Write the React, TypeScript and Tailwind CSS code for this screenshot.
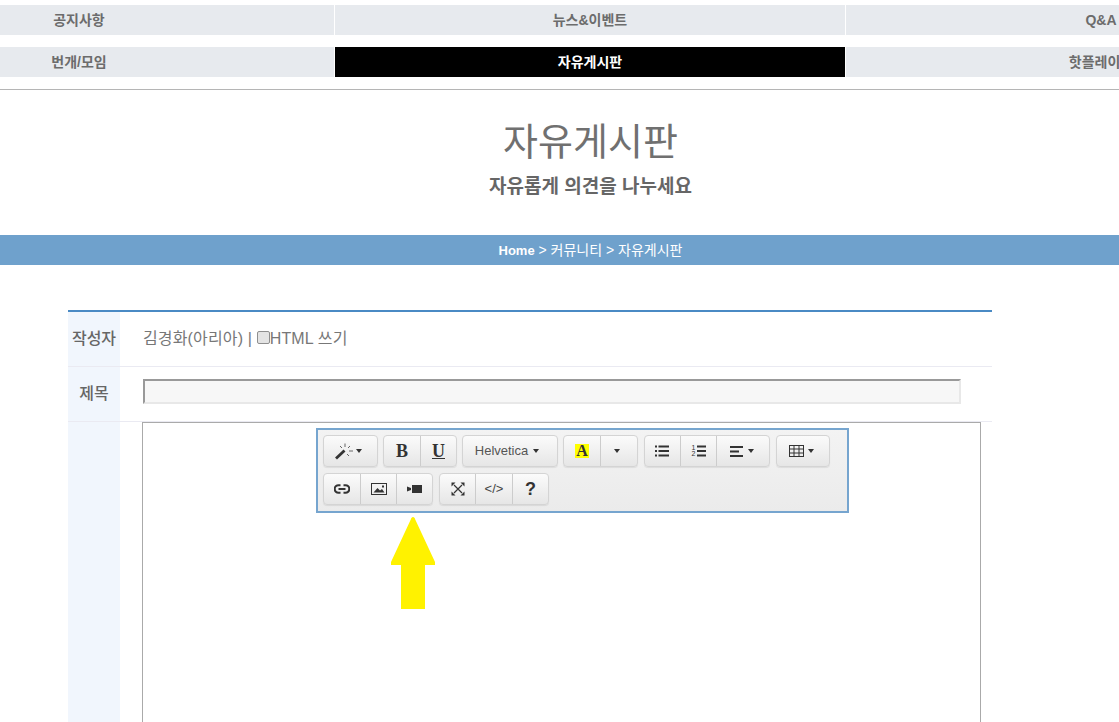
import React from "react";

const font = { fontFamily: '"Liberation Sans","Noto Sans CJK KR",sans-serif' };
const serif = { fontFamily: '"Liberation Serif",serif' };

const Caret = ({ className = "" }: { className?: string }) => (
  <span className={"inline-block w-0 h-0 border-x-[3.5px] border-x-transparent border-t-[4px] border-t-[#333] " + className} />
);

const Btn = ({ w, children, last }: { w: string; children: React.ReactNode; last?: boolean }) => (
  <div className={w + " h-full flex items-center justify-center " + (last ? "" : "border-r border-[#ccc]")}>{children}</div>
);

const Group = ({ children }: { children: React.ReactNode }) => (
  <div className="h-[32px] flex rounded-[4px] border border-[#d4d4d4] bg-gradient-to-b from-[#fbfbfb] to-[#e6e6e6] shadow-[0_1px_1px_rgba(0,0,0,0.08)] text-[#333]">
    {children}
  </div>
);

const Wand = () => (
  <svg width="19" height="17" viewBox="0 0 19 17" fill="none">
    <path d="M1 15.5L9.5 7.5" stroke="#333" strokeWidth="2.8" />
    <path d="M10 0.5V4M5 3l2 2M15 3l-2 2M14 8h4M12 11l2 2" stroke="#666" strokeWidth="1" />
  </svg>
);
const LinkI = () => (
  <svg width="16" height="10" viewBox="0 0 16 10" fill="none" stroke="#333" strokeWidth="2">
    <path d="M6.5 1.2H4.5a3.8 3.8 0 0 0 0 7.6h2" />
    <path d="M9.5 1.2h2a3.8 3.8 0 0 1 0 7.6h-2" />
    <path d="M4.5 5h7" />
  </svg>
);
const Pic = () => (
  <svg width="16" height="12" viewBox="0 0 16 12">
    <rect x="0.5" y="0.5" width="15" height="11" fill="none" stroke="#333" />
    <path d="M2.5 9.5L6.5 5l2.5 2.5L11 6l2.5 3.5z" fill="#333" />
    <rect x="11" y="2.5" width="2" height="2" fill="#333" />
  </svg>
);
const Video = () => (
  <svg width="15" height="8" viewBox="0 0 15 8">
    <rect x="5" y="0" width="10" height="8" fill="#333" />
    <path d="M0 1.5L4 3v2L0 6.5z" fill="#333" />
  </svg>
);
const Expand = () => (
  <svg width="14" height="14" viewBox="0 0 14 14" fill="none">
    <path d="M3 3l8 8M11 3l-8 8" stroke="#333" strokeWidth="1.2" />
    <path d="M0.5 0.5h4l-4 4zM13.5 0.5h-4l4 4zM0.5 13.5h4l-4-4zM13.5 13.5h-4l4-4z" fill="#333" />
  </svg>
);
const Ul = () => (
  <svg width="14" height="12" viewBox="0 0 14 12" fill="#333">
    <rect x="0" y="0.5" width="2" height="2" /><rect x="0" y="5" width="2" height="2" /><rect x="0" y="9.5" width="2" height="2" />
    <rect x="3.5" y="0.5" width="10.5" height="2" /><rect x="3.5" y="5" width="10.5" height="2" /><rect x="3.5" y="9.5" width="10.5" height="2" />
  </svg>
);
const Ol = () => (
  <div className="relative w-[14px] h-[12px]">
    <svg width="14" height="12" viewBox="0 0 14 12" fill="#333" className="block">
      <rect x="5" y="0.5" width="9" height="2" /><rect x="5" y="5" width="9" height="2" /><rect x="5" y="9.5" width="9" height="2" />
    </svg>
    <span className="absolute left-0 top-[-1px] text-[7px] leading-[7px] text-[#333]">1</span>
    <span className="absolute left-0 top-[5px] text-[7px] leading-[7px] text-[#333]">2</span>
  </div>
);
const AlignL = () => (
  <svg width="13" height="11" viewBox="0 0 13 11" fill="#333">
    <rect x="0" y="0" width="13" height="2" /><rect x="0" y="4.5" width="9" height="2" /><rect x="0" y="9" width="13" height="2" />
  </svg>
);
const TableI = () => (
  <svg width="15" height="12" viewBox="0 0 15 12" fill="none" stroke="#333" strokeWidth="1">
    <rect x="0.5" y="0.5" width="14" height="11" />
    <path d="M0.5 4h14M0.5 8h14M5 0.5v11M10 0.5v11" />
  </svg>
);

const Toolbar = () => (
  <div className="w-[533px] h-[85px] ml-[173px] mt-[5px] border-2 border-[#76a5cf] bg-gradient-to-b from-[#f3f3f3] to-[#ebebeb] pt-[5px] pl-[5px]">
    <div className="flex gap-[5px] h-[32px]">
      <Group><Btn w="w-[53px]" last><span className="flex items-center gap-[2px] mr-[5px]"><Wand /><Caret /></span></Btn></Group>
      <Group>
        <Btn w="w-[37px]"><span className="text-[18px] font-bold text-[#333]" style={serif}>B</span></Btn>
        <Btn w="w-[35px]" last><span className="text-[18px] font-bold underline text-[#333]" style={serif}>U</span></Btn>
      </Group>
      <Group><Btn w="w-[94px]" last><span className="text-[13px] text-[#555] mr-[5px] ml-[-6px]">Helvetica</span><Caret /></Btn></Group>
      <Group>
        <Btn w="w-[37px]"><span className="w-[14px] h-[14px] bg-[#ffff00] flex items-center justify-center text-[16px] leading-none font-bold text-[#333]" style={serif}>A</span></Btn>
        <Btn w="w-[36px]" last><Caret className="mr-[5px]" /></Btn>
      </Group>
      <div className="flex gap-[6px] ml-[1px]">
        <Group>
          <Btn w="w-[36px]"><span className="mr-[2px] flex"><Ul /></span></Btn>
          <Btn w="w-[36px]"><Ol /></Btn>
          <Btn w="w-[52px]" last><span className="flex items-center gap-[5px] mr-[3px]"><AlignL /><Caret /></span></Btn>
        </Group>
        <Group><Btn w="w-[52px]" last><span className="flex items-center gap-[4px] mr-[3px]"><TableI /><Caret /></span></Btn></Group>
      </div>
    </div>
    <div className="flex gap-[6px] h-[32px] mt-[6px]">
      <Group>
        <Btn w="w-[37px]"><LinkI /></Btn>
        <Btn w="w-[36px]"><Pic /></Btn>
        <Btn w="w-[35px]" last><Video /></Btn>
      </Group>
      <Group>
        <Btn w="w-[36px]"><Expand /></Btn>
        <Btn w="w-[37px]"><span className="text-[13px] text-[#444]">&lt;/&gt;</span></Btn>
        <Btn w="w-[35px]" last><span className="text-[18px] font-bold text-[#333]">?</span></Btn>
      </Group>
    </div>
  </div>
);

const Nav = ({ label, active }: { label: string; active?: boolean }) => (
  <div className={"h-[30px] w-[510px] flex items-center justify-center text-[14px] font-bold " + (active ? "bg-black text-white" : "bg-[#e7eaee] text-[#6c6c6c]")}>
    {label}
  </div>
);

export default function App() {
  return (
    <div className="w-[1119px] h-[722px] overflow-hidden bg-white" style={font}>
      <div className="w-[1532px] ml-[-176px]">
        <div className="pt-[5px] flex flex-col gap-[12px]">
          <div className="flex gap-[1px]"><Nav label="공지사항" /><Nav label="뉴스&이벤트" /><Nav label="Q&A" /></div>
          <div className="flex gap-[1px]"><Nav label="번개/모임" /><Nav label="자유게시판" active /><Nav label="핫플레이스" /></div>
        </div>
        <div className="mt-[12px] border-t border-[#b5b5b5]" />
        <div className="text-center text-[38px] leading-[40px] text-[#707070] mt-[32px] pl-[1px]">자유게시판</div>
        <div className="text-center text-[19px] leading-[26px] font-bold text-[#666] mt-[12px] pl-[1px]">자유롭게 의견을 나누세요</div>
        <div className="mt-[35px] h-[30px] bg-[#6fa1cc] flex items-center justify-center text-white text-[14px] pl-[1px]">
          <span><b className="text-[13px]">Home</b> &gt; 커뮤니티 &gt; 자유게시판</span>
        </div>
        <div className="ml-[244px] w-[924px] mt-[45px] border-t-2 border-[#4a8ac4]">
          <div className="flex h-[55px] border-b border-[#eaeaf2]">
            <div className="w-[52px] bg-[#f1f6fd] flex items-center justify-center text-[16px] font-medium text-[#666]">작성자</div>
            <div className="pl-[23px] flex items-center text-[16px] tracking-[0.15px] text-[#777] whitespace-pre">
              김경화(아리아) | <input type="checkbox" className="appearance-none w-[13px] h-[13px] bg-[#e4e4e4] border border-[#8f8f8f] rounded-[2px] mb-[4px]" readOnly />HTML 쓰기
            </div>
          </div>
          <div className="flex h-[55px] border-b border-[#eaeaf2]">
            <div className="w-[52px] bg-[#f1f6fd] flex items-center justify-center text-[16px] font-medium text-[#666]">제목</div>
            <div className="pl-[23px] pt-[12px]">
              <div className="w-[818px] h-[25px] bg-[#f7f7f7] border-2 border-b-[#e8e8e8] border-r-[#e8e8e8] border-t-[#999] border-l-[#999]" />
            </div>
          </div>
          <div className="flex h-[310px]">
            <div className="w-[52px] bg-[#f1f6fd]" />
            <div className="ml-[22px] w-[839px] border border-[#aaa] relative">
              <Toolbar />
              <svg className="absolute left-[247px] top-[93px]" width="46" height="94" viewBox="0 0 46 94">
                <path d="M23 1C24 1 25 2 25 3L45 46V49H35V93H11V49H1V46L21 3C21 2 22 1 23 1Z" fill="#fff200" />
              </svg>
            </div>
          </div>
        </div>
      </div>
    </div>
  );
}
